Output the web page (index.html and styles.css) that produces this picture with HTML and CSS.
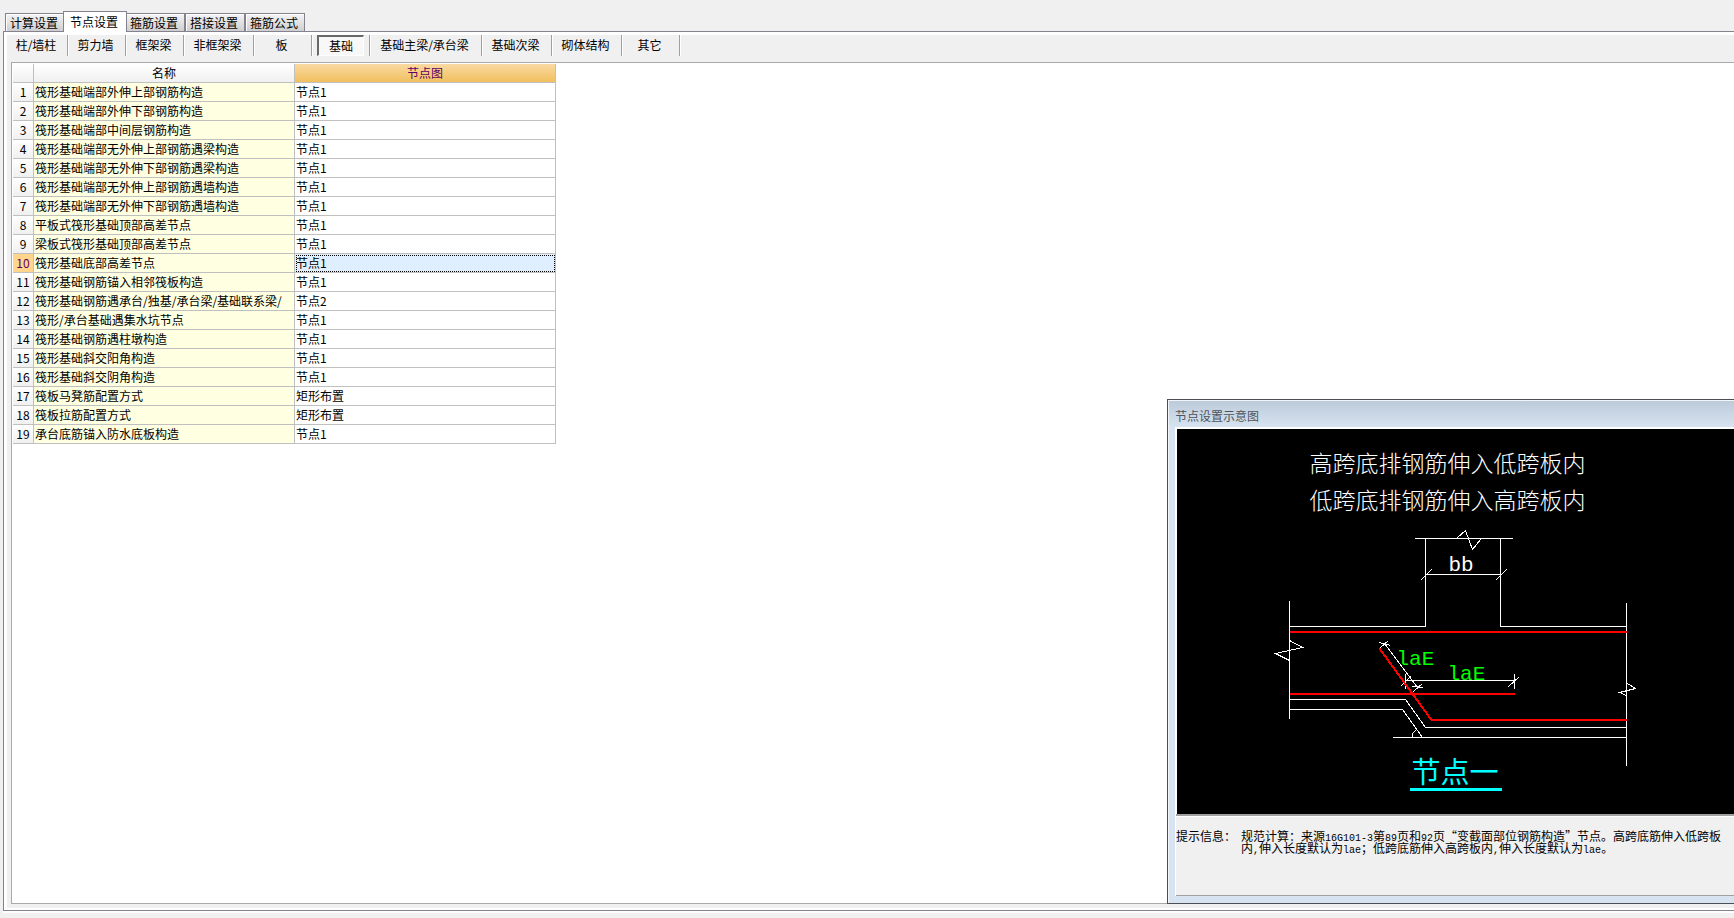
FILE: index.html
```html
<!DOCTYPE html>
<html lang="zh-CN">
<head>
<meta charset="utf-8">
<title>节点设置</title>
<link rel="stylesheet" href="styles.css">
</head>
<body>
<nav class="tabs" aria-label="设置">
  <button class="tab">计算设置</button>
  <button class="tab tab-active">节点设置</button>
  <button class="tab">箍筋设置</button>
  <button class="tab">搭接设置</button>
  <button class="tab">箍筋公式</button>
</nav>
<main class="frame">
  <div class="page">
    <div class="toolbar">
      <div class="slot"><button class="tool">柱/墙柱</button></div>
      <div class="slot"><button class="tool">剪力墙</button></div>
      <div class="slot"><button class="tool">框架梁</button></div>
      <div class="slot"><button class="tool">非框架梁</button></div>
      <div class="slot"><button class="tool">板</button></div>
      <div class="slot"><button class="tool tool-pressed" aria-pressed="true">基础</button></div>
      <div class="slot"><button class="tool">基础主梁/承台梁</button></div>
      <div class="slot"><button class="tool">基础次梁</button></div>
      <div class="slot"><button class="tool">砌体结构</button></div>
      <div class="slot"><button class="tool">其它</button></div>
    </div>
    <div class="sheet">
      <table class="grid">
        <colgroup><col class="col-num"><col class="col-name"><col class="col-node"></colgroup>
        <thead><tr><th></th><th>名称</th><th class="head-active">节点图</th></tr></thead>
        <tbody>
          <tr><th>1</th><td class="name">筏形基础端部外伸上部钢筋构造</td><td>节点1</td></tr>
          <tr><th>2</th><td class="name">筏形基础端部外伸下部钢筋构造</td><td>节点1</td></tr>
          <tr><th>3</th><td class="name">筏形基础端部中间层钢筋构造</td><td>节点1</td></tr>
          <tr><th>4</th><td class="name">筏形基础端部无外伸上部钢筋遇梁构造</td><td>节点1</td></tr>
          <tr><th>5</th><td class="name">筏形基础端部无外伸下部钢筋遇梁构造</td><td>节点1</td></tr>
          <tr><th>6</th><td class="name">筏形基础端部无外伸上部钢筋遇墙构造</td><td>节点1</td></tr>
          <tr><th>7</th><td class="name">筏形基础端部无外伸下部钢筋遇墙构造</td><td>节点1</td></tr>
          <tr><th>8</th><td class="name">平板式筏形基础顶部高差节点</td><td>节点1</td></tr>
          <tr><th>9</th><td class="name">梁板式筏形基础顶部高差节点</td><td>节点1</td></tr>
          <tr><th class="row-active">10</th><td class="name">筏形基础底部高差节点</td><td class="cell-active">节点1</td></tr>
          <tr><th>11</th><td class="name">筏形基础钢筋锚入相邻筏板构造</td><td>节点1</td></tr>
          <tr><th>12</th><td class="name">筏形基础钢筋遇承台/独基/承台梁/基础联系梁/</td><td>节点2</td></tr>
          <tr><th>13</th><td class="name">筏形/承台基础遇集水坑节点</td><td>节点1</td></tr>
          <tr><th>14</th><td class="name">筏形基础钢筋遇柱墩构造</td><td>节点1</td></tr>
          <tr><th>15</th><td class="name">筏形基础斜交阳角构造</td><td>节点1</td></tr>
          <tr><th>16</th><td class="name">筏形基础斜交阴角构造</td><td>节点1</td></tr>
          <tr><th>17</th><td class="name">筏板马凳筋配置方式</td><td>矩形布置</td></tr>
          <tr><th>18</th><td class="name">筏板拉筋配置方式</td><td>矩形布置</td></tr>
          <tr><th>19</th><td class="name">承台底筋锚入防水底板构造</td><td>节点1</td></tr>
        </tbody>
      </table>
    </div>
  </div>
</main>
<section class="window" aria-label="节点设置示意图">
  <h1 class="window-title">节点设置示意图</h1>
  <div class="window-body">
    <div class="canvas">
      <svg class="drawing" viewBox="1176.5 428.5 557 385" role="img" aria-label="节点一">
        <g class="line">
          <path d="M1414 538H1512M1456 538L1465 530L1472 549L1480 539M1425 538V626M1500 538V626"/>
          <path d="M1425 574H1500M1420 580L1431 569M1495 580L1506 569"/>
          <path d="M1289 626H1425M1500 626H1626M1289 600V718M1626 602V765"/>
          <path d="M1289 640L1302 647L1275 653L1289 660M1627 683L1635 688L1619 692L1626 695"/>
          <path d="M1289 699H1405L1425 727H1626M1289 709H1402L1422 737M1392 737H1626M1412 737V733L1416 729"/>
          <path d="M1384 643L1417 687M1380 647L1388 640M1379 642L1390 645M1413 691L1422 683M1412 686L1423 687"/>
          <path d="M1405 680H1514M1405 673V688M1514 673V688M1400 686L1410 676M1508 686L1519 676"/>
        </g>
        <path class="rebar" d="M1289 631.5H1626M1289 693.5H1514M1379 648L1431 719.5H1626"/>
        <path class="underline" d="M1409.5 789H1501.5"/>
        <text class="note" x="1309" y="471">高跨底排钢筋伸入低跨板内</text>
        <text class="note" x="1309" y="508">低跨底排钢筋伸入高跨板内</text>
        <text class="dim" x="1448" y="570">bb</text>
        <text class="dim dim-green" x="1396" y="664">laE</text>
        <text class="dim dim-green" x="1447" y="679">laE</text>
        <text class="caption" x="1411" y="782">节点一</text>
      </svg>
    </div>
    <dl class="hint">
      <dt>提示信息：</dt>
      <dd>规范计算：来源<span class="latin">16G101-3</span>第<span class="latin">89</span>页和<span class="latin">92</span>页“变截面部位钢筋构造”节点。高跨底筋伸入低跨板</dd>
      <dd>内<span class="latin">,</span>伸入长度默认为<span class="latin">lae</span>；低跨底筋伸入高跨板内<span class="latin">,</span>伸入长度默认为<span class="latin">lae</span>。</dd>
    </dl>
  </div>
</section>
</body>
</html>
```

FILE: styles.css
```css
* {
  box-sizing: border-box;
}

body {
  margin: 0;
  height: 100vh;
  display: flex;
  flex-direction: column;
  position: relative;
  overflow: hidden;
  background: #f0f0f0;
  color: #000;
  font: 12px/16px "Noto Sans CJK SC", sans-serif;
}

button {
  font: inherit;
  color: inherit;
  padding: 0;
  white-space: nowrap;
}

/* Top tabs */
.tabs {
  display: flex;
  align-items: flex-end;
  height: 31px;
  padding-left: 5px;
}

.tab {
  width: 60px;
  height: 18px;
  padding-right: 2px;
  border: 1px solid #84828e;
  border-bottom: 0;
  background: linear-gradient(#f4f4f4, #cfcfcf);
  box-shadow: inset 1px 1px #fff;
}

.tab-active {
  position: relative;
  z-index: 1;
  width: 64px;
  height: 21px;
  margin: 0 -2px -1px;
  background: #fff;
}

/* Main frame, open on the right */
.frame {
  flex: 1;
  display: flex;
  min-height: 0;
  margin: 0 0 7px 3px;
  padding: 3px 0 2px 3px;
  border: solid #84828e;
  border-width: 1px 0 1px 1px;
  background: #fff;
  box-shadow: 0 2px #fff;
}

.page {
  flex: 1;
  display: flex;
  flex-direction: column;
  padding-bottom: 4px;
  background: #f0f0f0;
}

.toolbar {
  display: grid;
  grid-template-columns: 61px 58px 58px 70px 58px 58px 112px 70px 70px 58px;
  height: 21px;
  margin-bottom: 6px;
}

.slot {
  display: flex;
  justify-content: center;
  border-right: 1px solid #a0a0a0;
  box-shadow: 1px 0 #fff;
}

.tool {
  flex: 1;
  padding: 0 2px 2px 0;
  border: 0;
  background: none;
}

.tool-pressed {
  margin: 0 5px;
  padding: 0;
  border: 1px solid #fff;
  border-top: 2px solid #696969;
  border-left: 2px solid #696969;
  background: #f8f8f8;
}

.sheet {
  flex: 1;
  margin-left: 4px;
  padding: 1px 0 0 1px;
  border: solid #a9a9ad;
  border-width: 1px 0 1px 1px;
  background: #fff;
}

/* Settings grid */
.grid {
  width: 543px;
  table-layout: fixed;
  border-spacing: 0;
}

.col-num {
  width: 21px;
}

.col-name,
.col-node {
  width: 261px;
}

.grid th,
.grid td {
  height: 19px;
  padding: 0;
  border: solid #c0c0c0;
  border-width: 0 1px 1px 0;
  font-weight: 400;
  white-space: nowrap;
  overflow: hidden;
}

.grid th {
  background: linear-gradient(#fff, #f0f0f0);
  text-align: center;
}

.grid td {
  padding-left: 1px;
}

.grid .name {
  background: #ffffe1;
}

.grid .head-active {
  background: linear-gradient(#f9d9a2, #f1c05e);
  color: #600060;
}

.grid .row-active {
  background: #ffd58d;
  color: #600060;
}

.grid .cell-active {
  background: #dfefff;
  outline: 1px dotted #000;
  outline-offset: -2px;
}

/* Floating preview window */
.window {
  position: absolute;
  right: 0;
  bottom: 14px;
  width: 567px;
  padding: 0 0 7px 7px;
  border: solid #4b4e52;
  border-width: 1px 0 1px 1px;
  background: #d7e3f0;
  background-clip: padding-box;
  box-shadow: inset 1px 1px #f2f6fa;
}

.window-title {
  margin: 1px 0 0 -6px;
  height: 26px;
  padding-left: 6px;
  background: linear-gradient(#bccada, #d7e3f0);
  color: #4c555e;
  font-size: 12px;
  font-weight: 400;
  line-height: 30px;
}

.window-body {
  border: solid #fff;
  border-width: 2px 0 0 1px;
}

.canvas {
  padding-left: 1px;
  border-bottom: 2px solid #a0a0a0;
  background: linear-gradient(90deg, #fff 1px, #000 1px);
}

.drawing {
  display: block;
  width: 100%;
  height: auto;
}

.line,
.rebar,
.underline {
  fill: none;
  shape-rendering: crispEdges;
}

.line {
  stroke: #fff;
}

.rebar {
  stroke: #f00;
  stroke-width: 2px;
}

.underline {
  stroke: #0ff;
  stroke-width: 3px;
}

.note {
  fill: #fff;
  font-size: 23px;
  font-weight: 300;
}

.dim {
  fill: #fff;
  font: 21px "Liberation Mono", monospace;
}

.dim-green {
  fill: #0f0;
}

.caption {
  fill: #0ff;
  font-size: 29px;
}

.hint {
  display: grid;
  grid-template-columns: 65px 1fr;
  grid-auto-rows: 12px;
  height: 80px;
  margin: 0;
  padding-top: 13px;
  border-top: 1px solid #fff;
  border-bottom: 1px solid #a0a0a0;
  background: #f0f0f0;
  line-height: 12px;
  white-space: nowrap;
}

.hint dd {
  grid-column: 2;
  margin: 0;
}

/* Half-width characters, 6px each beside the 12px Chinese text */
.latin {
  font: 10px/12px "Liberation Mono", monospace;
}
```
